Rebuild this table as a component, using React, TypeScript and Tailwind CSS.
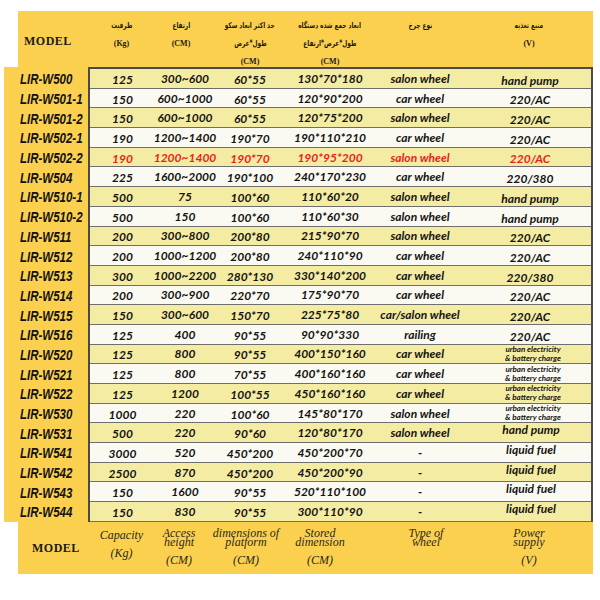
import React from "react";

type Row = {
  m: string;
  c: string;
  h: string;
  p: string;
  s: string;
  w: string;
  pw: string;
  red?: boolean;
};

const rows: Row[] = [
  { m: "LIR-W500", c: "125", h: "300~600", p: "60*55", s: "130*70*180", w: "salon wheel", pw: "hand pump" },
  { m: "LIR-W501-1", c: "150", h: "600~1000", p: "60*55", s: "120*90*200", w: "car wheel", pw: "220/AC" },
  { m: "LIR-W501-2", c: "150", h: "600~1000", p: "60*55", s: "120*75*200", w: "salon wheel", pw: "220/AC" },
  { m: "LIR-W502-1", c: "190", h: "1200~1400", p: "190*70", s: "190*110*210", w: "car wheel", pw: "220/AC" },
  { m: "LIR-W502-2", c: "190", h: "1200~1400", p: "190*70", s: "190*95*200", w: "salon wheel", pw: "220/AC", red: true },
  { m: "LIR-W504", c: "225", h: "1600~2000", p: "190*100", s: "240*170*230", w: "car wheel", pw: "220/380" },
  { m: "LIR-W510-1", c: "500", h: "75", p: "100*60", s: "110*60*20", w: "salon wheel", pw: "hand pump" },
  { m: "LIR-W510-2", c: "500", h: "150", p: "100*60", s: "110*60*30", w: "salon wheel", pw: "hand pump" },
  { m: "LIR-W511", c: "200", h: "300~800", p: "200*80", s: "215*90*70", w: "salon wheel", pw: "220/AC" },
  { m: "LIR-W512", c: "200", h: "1000~1200", p: "200*80", s: "240*110*90", w: "car wheel", pw: "220/AC" },
  { m: "LIR-W513", c: "300", h: "1000~2200", p: "280*130", s: "330*140*200", w: "car wheel", pw: "220/380" },
  { m: "LIR-W514", c: "200", h: "300~900", p: "220*70", s: "175*90*70", w: "car wheel", pw: "220/AC" },
  { m: "LIR-W515", c: "150", h: "300~600", p: "150*70", s: "225*75*80", w: "car/salon wheel", pw: "220/AC" },
  { m: "LIR-W516", c: "125", h: "400", p: "90*55", s: "90*90*330", w: "railing", pw: "220/AC" },
  { m: "LIR-W520", c: "125", h: "800", p: "90*55", s: "400*150*160", w: "car wheel", pw: "urban" },
  { m: "LIR-W521", c: "125", h: "800", p: "70*55", s: "400*160*160", w: "car wheel", pw: "urban" },
  { m: "LIR-W522", c: "125", h: "1200", p: "100*55", s: "450*160*160", w: "car wheel", pw: "urban" },
  { m: "LIR-W530", c: "1000", h: "220", p: "100*60", s: "145*80*170", w: "salon wheel", pw: "urban" },
  { m: "LIR-W531", c: "500", h: "220", p: "90*60", s: "120*80*170", w: "salon wheel", pw: "hand pump top" },
  { m: "LIR-W541", c: "3000", h: "520", p: "450*200", s: "450*200*70", w: "-", pw: "liquid fuel" },
  { m: "LIR-W542", c: "2500", h: "870", p: "450*200", s: "450*200*90", w: "-", pw: "liquid fuel" },
  { m: "LIR-W543", c: "150", h: "1600", p: "90*55", s: "520*110*100", w: "-", pw: "liquid fuel" },
  { m: "LIR-W544", c: "150", h: "830", p: "90*55", s: "300*110*90", w: "-", pw: "liquid fuel" },
];

const fa = { fontFamily: '"DejaVu Sans", "Noto Sans", sans-serif' };
const serif = { fontFamily: '"Liberation Serif", "DejaVu Serif", serif' };
const cellFont = { fontFamily: 'Lato, "Liberation Sans", sans-serif' };
const modelFont = { fontFamily: '"Liberation Sans", Arial, sans-serif' };

function Power({ v }: { v: string }) {
  if (v === "urban") {
    return (
      <div className="flex h-full flex-col items-center justify-center pl-[10px] text-[8px] leading-[9px]">
        <span>urban electricity</span>
        <span>&amp; battery charge</span>
      </div>
    );
  }
  if (v === "liquid fuel" || v === "hand pump top") {
    return (
      <div className="flex h-full items-start justify-center pl-[6px] text-[12px] leading-[14px]">
        {v === "hand pump top" ? "hand pump" : v}
      </div>
    );
  }
  return (
    <div className="flex h-full items-end justify-center pl-[4px] text-[12px] leading-[15px]">
      {v}
    </div>
  );
}

function Fa({ children }: { children: React.ReactNode }) {
  return (
    <span
      style={fa}
      dir="rtl"
      className="inline-block origin-center scale-x-[0.72] whitespace-nowrap text-[8px]"
    >
      {children}
    </span>
  );
}

export default function App() {
  return (
    <div className="relative h-[600px] w-[600px] overflow-hidden bg-white pt-[11px]">
      {/* header */}
      <div className="ml-[18px] flex h-[56px] w-[575px] bg-[#fcd04f] font-bold text-[#1a1a1a]">
        <div className="flex w-[70px] items-center pl-[6px] pt-[4px]">
          <span className="text-[12px] tracking-[0.5px]" style={serif}>
            MODEL
          </span>
        </div>
        <div className="grid w-[505px] grid-cols-[67px_60px_70px_90px_90px_128px] pt-[6px] text-center text-[8px] leading-[18px]">
          <div className="flex flex-col items-center">
            <Fa>ظرفیت</Fa>
            <span style={serif}>(Kg)</span>
          </div>
          <div className="flex flex-col items-center pr-[8px]">
            <Fa>ارتفاع</Fa>
            <span style={serif}>(CM)</span>
          </div>
          <div className="flex flex-col items-center">
            <Fa>حد اکثر ابعاد سکو</Fa>
            <Fa>طول*عرض</Fa>
            <span style={serif}>(CM)</span>
          </div>
          <div className="flex flex-col items-center">
            <Fa>ابعاد جمع شده دستگاه</Fa>
            <Fa>طول*عرض*ارتفاع</Fa>
            <span style={serif}>(CM)</span>
          </div>
          <div className="flex flex-col items-center">
            <Fa>نوع چرخ</Fa>
          </div>
          <div className="flex flex-col items-center">
            <Fa>منبع تغذیه</Fa>
            <span style={serif}>(V)</span>
          </div>
        </div>
      </div>

      {/* body */}
      <div className="flex">
        <div className="ml-[4px] w-[84px] bg-[#fcd04f] pt-[2px]">
          {rows.map((r) => (
            <div key={r.m} className="flex h-[19.7px] items-center pl-[16px] pt-[1px]">
              <span
                className="inline-block origin-left scale-x-[0.82] whitespace-nowrap text-[14px] font-bold italic leading-none text-[#111]"
                style={modelFont}
              >
                {r.m}
              </span>
            </div>
          ))}
        </div>
        <div className="w-[505px] border-x-2 border-t-2 border-[#4a4a4a]">
          {rows.map((r, i) => (
            <div
              key={r.m}
              className={
                "grid h-[19.7px] grid-cols-[65px_60px_70px_90px_90px_126px] border-b border-[#6e6e6e] text-center font-bold italic " +
                (i % 2 === 0 ? "bg-[#f4eca2] " : "bg-[#fbfaf2] ") +
                (r.red ? "text-[#ee1c1c]" : "text-[#141414]")
              }
              style={cellFont}
            >
              <div className="flex items-center justify-center pt-[3px] text-[12px] leading-none">{r.c}</div>
              <div className="flex items-center justify-center pt-[1px] text-[12px] leading-none">{r.h}</div>
              <div className="flex items-center justify-center pt-[3px] text-[12px] leading-none">{r.p}</div>
              <div className="flex items-center justify-center pt-[1px] text-[12px] leading-none">{r.s}</div>
              <div className="flex items-center justify-center pt-[1px] text-[12px] leading-none">{r.w}</div>
              <Power v={r.pw} />
            </div>
          ))}
        </div>
      </div>

      {/* footer */}
      <div
        className="ml-[18px] flex h-[52px] w-[575px] bg-[#fcd04f] text-[#2a2a20]"
        style={serif}
      >
        <div className="flex w-[70px] items-center pl-[14px] pt-[1px]">
          <span className="text-[12px] font-bold not-italic tracking-[0.5px] text-[#1a1a1a]">MODEL</span>
        </div>
        <div className="grid w-[505px] grid-cols-[67px_60px_70px_90px_90px_128px] pt-[4px] text-center text-[12px] italic">
          <div className="flex flex-col items-center leading-[18px]">
            <span>Capacity</span>
            <span>(Kg)</span>
          </div>
          <div className="flex flex-col items-center pr-[12px] leading-[9px]">
            <span className="pt-[3px]">Access</span>
            <span>height</span>
            <span className="pt-[9px]">(CM)</span>
          </div>
          <div className="flex flex-col items-center pr-[8px] leading-[9px]">
            <span className="whitespace-nowrap pt-[3px]">dimensions of</span>
            <span>platform</span>
            <span className="pt-[9px]">(CM)</span>
          </div>
          <div className="flex flex-col items-center pr-[20px] leading-[9px]">
            <span className="pt-[3px]">Stored</span>
            <span>dimension</span>
            <span className="pt-[9px]">(CM)</span>
          </div>
          <div className="flex flex-col items-center pl-[12px] leading-[9px]">
            <span className="pt-[3px]">Type of</span>
            <span>wheel</span>
          </div>
          <div className="flex flex-col items-center leading-[9px]">
            <span className="pt-[3px]">Power</span>
            <span>supply</span>
            <span className="pt-[9px]">(V)</span>
          </div>
        </div>
      </div>
    </div>
  );
}
